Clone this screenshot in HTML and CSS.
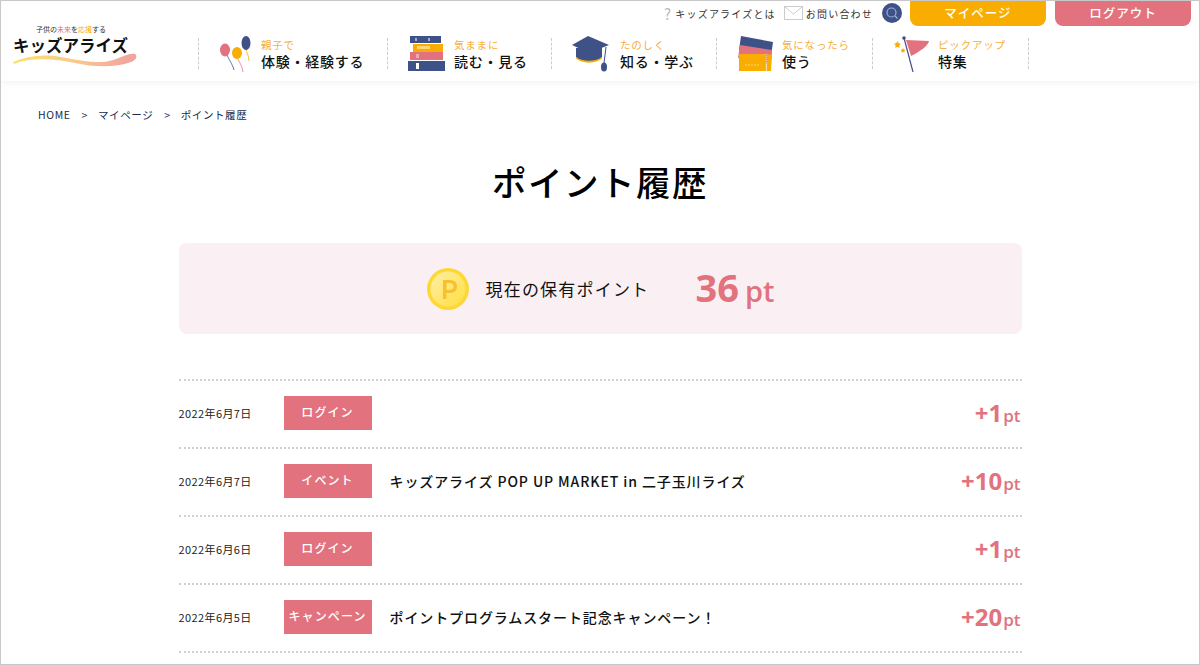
FILE: index.html
```html
<!DOCTYPE html>
<html lang="ja">
<head>
    <meta charset="UTF-8">
    <meta name="viewport" content="width=device-width, initial-scale=1.0">
    <title>ポイント履歴</title>
    <link rel="stylesheet" href="styles.css">
</head>
<body>
<div class="frame">
    <header class="header">
        <a class="logo">
            <span class="logo-tag">子供の<em class="red">未来</em>を<em class="yellow">応援</em>する</span>
            <span class="logo-name">キッズアライズ</span>
            <svg class="logo-wave" width="124" height="15" viewBox="0 0 124 15">
                <defs>
                    <linearGradient id="wave" x1="0" x2="1" y1="0" y2="0">
                        <stop offset="0" stop-color="#fbe36a"/>
                        <stop offset="0.5" stop-color="#f9c98d"/>
                        <stop offset="1" stop-color="#f2a0a0"/>
                    </linearGradient>
                </defs>
                <path d="M0 9C14 3 30 1 48 4C66 7 84 12 100 7C110 4 116 0 122 1C125 3 123 7 118 9C102 15 80 14 62 10C42 6 18 4 1 11Z" fill="url(#wave)"/>
            </svg>
        </a>
        <div class="header-right">
            <div class="util">
                <a class="util-link"><span class="q">?</span>キッズアライズとは</a>
                <a class="util-link">
                    <svg width="19" height="14" viewBox="0 0 19 14"><rect x="0.5" y="0.5" width="18" height="13" fill="#fff" stroke="#ccc"/><path d="M1 1L9.5 8L18 1" fill="none" stroke="#ccc"/></svg>
                    お問い合わせ
                </a>
                <span class="search">
                    <svg width="14" height="14" viewBox="0 0 14 14"><circle cx="6.5" cy="6.5" r="4.5" fill="none" stroke="#9fb0d6" stroke-width="1.2"/><path d="M10 10L12.5 12.5" stroke="#9fb0d6" stroke-width="1.2"/></svg>
                </span>
                <a class="btn btn-mypage">マイページ</a>
                <a class="btn btn-logout">ログアウト</a>
            </div>
            <nav class="nav">
                <a class="nav-item nav-1">
                    <svg width="36" height="38" viewBox="0 0 36 38">
                        <path d="M7 20C9 25 12 28 14 35" fill="none" stroke="#3f5288" stroke-width="0.8"/>
                        <path d="M17 22C19 27 22 30 23 37" fill="none" stroke="#e2727e" stroke-width="0.8"/>
                        <path d="M26 13C26 18 29 20 29 26" fill="none" stroke="#f8ad00" stroke-width="0.8"/>
                        <ellipse cx="5" cy="15" rx="5" ry="6.5" fill="#e2727e"/>
                        <ellipse cx="17" cy="18" rx="5" ry="6" fill="#f8ad00"/>
                        <ellipse cx="26" cy="8" rx="4.5" ry="7" fill="#3f5288"/>
                    </svg>
                    <span class="nav-text"><small>親子で</small><b>体験・経験する</b></span>
                </a>
                <a class="nav-item nav-2">
                    <svg width="38" height="37" viewBox="0 0 38 37">
                        <rect x="2" y="1" width="31" height="7" fill="#3f5288"/>
                        <rect x="7" y="3" width="2" height="3" fill="#9fb0d6"/>
                        <rect x="20" y="3" width="2" height="3" fill="#9fb0d6"/>
                        <rect x="5" y="9" width="30" height="8" fill="#f8ad00"/>
                        <rect x="9" y="11" width="13" height="3" fill="#fbd873"/>
                        <rect x="2" y="17" width="33" height="8" fill="#e2727e"/>
                        <rect x="8" y="19" width="3" height="4" fill="#f0aab2"/>
                        <rect x="0" y="26" width="37" height="10" fill="#3f5288"/>
                        <rect x="8" y="28" width="3" height="6" fill="#fff"/>
                    </svg>
                    <span class="nav-text"><small>気ままに</small><b>読む・見る</b></span>
                </a>
                <a class="nav-item nav-3">
                    <svg width="38" height="36" viewBox="0 0 38 36">
                        <path d="M4 12V21C10 27 24 27 30 21V12Z" fill="#3f5288"/>
                        <path d="M4 21C10 26 24 26 30 21V22.5C24 28 10 28 4 22.5Z" fill="#f8ad00"/>
                        <path d="M16 0L37 9L17 17L0 9Z" fill="#3f5288"/>
                        <path d="M34 11L32 27" stroke="#3f5288" stroke-width="1"/>
                        <ellipse cx="32" cy="31" rx="3" ry="4.5" fill="#3f5288"/>
                    </svg>
                    <span class="nav-text"><small>たのしく</small><b>知る・学ぶ</b></span>
                </a>
                <a class="nav-item nav-4">
                    <svg width="36" height="36" viewBox="0 0 36 36">
                        <path d="M3 0L35 6L33 20L1 14Z" fill="#3f5288"/>
                        <path d="M2 9L34 14L33 28L0 22Z" fill="#e2727e"/>
                        <rect x="1" y="18" width="27" height="17" fill="#f8ad00"/>
                        <path d="M28.5 18L34 19L33 35L28.5 35Z" fill="#f8ad00"/>
                        <path d="M28.2 18V35" stroke="#fff" stroke-width="0.6" stroke-dasharray="1 1"/>
                        <path d="M7 29H22" stroke="#fbd873" stroke-width="1" stroke-dasharray="2 1"/>
                    </svg>
                    <span class="nav-text"><small>気になったら</small><b>使う</b></span>
                </a>
                <a class="nav-item nav-5">
                    <svg width="37" height="36" viewBox="0 0 37 36">
                        <path d="M10 2L19 36" stroke="#3f5288" stroke-width="1.2"/>
                        <circle cx="10" cy="2" r="1.8" fill="#3f5288"/>
                        <path d="M12 4L35 5C34 10 25 16 17 20Z" fill="#e2727e"/>
                        <path d="M3.5 5L4.7 7.3L7 7.7L5.3 9.5L5.7 12L3.5 10.8L1.300 12L1.700 9.500L0 7.700L2.300 7.300Z" fill="#f8ad00"/>
                        <path d="M9 12L9.800 13.500L11.500 13.800L10.300 15L10.600 16.700L9 15.900L7.400 16.700L7.700 15L6.500 13.800L8.200 13.500Z" fill="#f8ad00"/>
                    </svg>
                    <span class="nav-text"><small>ピックアップ</small><b>特集</b></span>
                </a>
            </nav>
        </div>
    </header>

    <div class="crumbs">
        <a>HOME</a><i>&gt;</i><a>マイページ</a><i>&gt;</i><span>ポイント履歴</span>
    </div>

    <main class="main">
        <h1 class="title">ポイント履歴</h1>

        <section class="summary">
            <svg class="coin" width="44" height="44" viewBox="0 0 44 44">
                <defs>
                    <linearGradient id="coin" x1="0" x2="1" y1="0" y2="1">
                        <stop offset="0" stop-color="#ffeeaa"/>
                        <stop offset="1" stop-color="#ffdf3c"/>
                    </linearGradient>
                </defs>
                <circle cx="22" cy="22" r="21" fill="#fdd835"/>
                <circle cx="22" cy="22" r="17.5" fill="url(#coin)"/>
                <path d="M17 32V13H24C29 13 31 16 31 19.5C31 23 29 26 24 26H20.5V32ZM20.5 16V23H23.5C26 23 27.5 22 27.5 19.5C27.5 17 26 16 23.5 16Z" fill="#f9c02e"/>
            </svg>
            <span class="summary-label">現在の保有ポイント</span>
            <span class="summary-value">36<small>pt</small></span>
        </section>

        <ul class="history">
            <li class="row">
                <span class="date">2022年6月7日</span>
                <span class="tag">ログイン</span>
                <span class="desc"></span>
                <span class="pts">+1<small>pt</small></span>
            </li>
            <li class="row">
                <span class="date">2022年6月7日</span>
                <span class="tag">イベント</span>
                <span class="desc">キッズアライズ POP UP MARKET in 二子玉川ライズ</span>
                <span class="pts">+10<small>pt</small></span>
            </li>
            <li class="row">
                <span class="date">2022年6月6日</span>
                <span class="tag">ログイン</span>
                <span class="desc"></span>
                <span class="pts">+1<small>pt</small></span>
            </li>
            <li class="row">
                <span class="date">2022年6月5日</span>
                <span class="tag">キャンペーン</span>
                <span class="desc">ポイントプログラムスタート記念キャンペーン！</span>
                <span class="pts">+20<small>pt</small></span>
            </li>
        </ul>
    </main>
</div>
</body>
</html>
```

FILE: styles.css
```css
html, body {
    margin: 0;
    padding: 0;
    height: 100%;
    overflow: hidden;
}
body {
    font-family: "Noto Sans CJK JP", "Noto Sans", sans-serif;
    color: #111;
    background: #fff;
}
ul {
    list-style: none;
    margin: 0;
    padding: 0;
}
.frame {
    box-sizing: border-box;
    height: 665px;
    border: 1px solid #c8c8c8;
    overflow: hidden;
}

/* header */
.header {
    display: flex;
    height: 80px;
    box-shadow: 0 2px 6px rgba(0,0,0,0.05);
}
.logo {
    flex: none;
    width: 197px;
    padding: 22px 0 0 12px;
    box-sizing: border-box;
    display: flex;
    flex-direction: column;
}
.logo-tag {
    font-size: 7px;
    line-height: 12px;
    height: 12px;
    padding-left: 23px;
    color: #333;
    white-space: nowrap;
}
.logo-tag em {
    font-style: normal;
}
.logo-tag .red { color: #e2727e; }
.logo-tag .yellow { color: #f8ad00; }
.logo-name {
    font-size: 16.5px;
    font-weight: 700;
    line-height: 20px;
    white-space: nowrap;
}
.logo-wave {
    margin-top: -2px;
}
.header-right {
    flex: 1;
    display: flex;
    flex-direction: column;
}
.util {
    display: flex;
    align-items: flex-start;
    justify-content: flex-end;
    height: 37px;
}
.util-link {
    display: flex;
    align-items: center;
    gap: 3px;
    font-size: 10px;
    letter-spacing: 1.2px;
    color: #333;
    height: 24px;
    margin-right: 8px;
}
.util-link .q {
    font-size: 15px;
    color: #bbb;
}
.search {
    width: 20px;
    height: 20px;
    border-radius: 50%;
    background: #3f5288;
    display: flex;
    align-items: center;
    justify-content: center;
    margin: 2px 8px 0 1px;
}
.btn {
    display: block;
    width: 136px;
    height: 25px;
    line-height: 24px;
    text-align: center;
    color: #fff;
    font-size: 12.5px;
    font-weight: 500;
    letter-spacing: 1px;
    border-radius: 0 0 8px 8px;
}
.btn-mypage {
    background: #f8ad00;
    margin-right: 9px;
}
.btn-logout {
    margin-right: 8px;
    background: #e2727e;
}
.nav {
    display: flex;
    height: 31px;
    align-items: center;
    border-left: 1px dashed #ccc;
    width: max-content;
}
.nav-item {
    box-sizing: border-box;
    display: flex;
    align-items: center;
    height: 31px;
    border-right: 1px dashed #ccc;
    padding-left: 21px;
    gap: 5px;
}
.nav-item svg {
    flex: none;
}
.nav-1 { width: 189px; }
.nav-2 { width: 164px; padding-left: 20px; gap: 8px; }
.nav-3 { width: 165px; padding-left: 20px; gap: 10px; }
.nav-4 { width: 156px; padding-left: 21px; gap: 8px; }
.nav-5 { width: 156px; padding-left: 21px; gap: 7px; }
.nav-text {
    display: flex;
    flex-direction: column;
    white-space: nowrap;
}
.nav-text small {
    font-size: 10.5px;
    line-height: 14px;
    letter-spacing: 0.8px;
    color: #f8ad3c;
}
.nav-text b {
    font-size: 14px;
    line-height: 18px;
    font-weight: 500;
    letter-spacing: 0.75px;
}

/* breadcrumb */
.crumbs {
    display: flex;
    align-items: center;
    padding: 26px 0 0 37px;
    font-size: 10.5px;
    line-height: 15px;
    letter-spacing: 0.6px;
    color: #1a2a4a;
}
.crumbs i {
    font-style: normal;
    margin: 0 10px 0 11px;
}

/* main */
.main {
    width: 843px;
    margin: 0 auto;
}
.title {
    margin: 34px 0 0;
    font-size: 34.5px;
    line-height: 50px;
    font-weight: 500;
    letter-spacing: 1.5px;
    text-align: center;
    color: #000;
}
.summary {
    display: flex;
    align-items: center;
    justify-content: center;
    height: 91px;
    margin-top: 37px;
    background: #faf0f3;
    border-radius: 8px;
}
.coin {
    flex: none;
}
.summary-label {
    margin-left: 16px;
    font-size: 17px;
    letter-spacing: 1.2px;
    width: 210px;
    white-space: nowrap;
}
.summary-value {
    font-size: 38px;
    line-height: 44px;
    font-weight: 700;
    color: #e2727e;
    font-family: "Open Sans", "Noto Sans", sans-serif;
}
.summary-value small {
    font-size: 29px;
    margin-left: 6px;
    font-weight: 600;
}
.history {
    margin-top: 45px;
    border-top: 2px dotted #d0d0d0;
}
.row {
    display: flex;
    align-items: center;
    height: 63px;
    padding-bottom: 3px;
    border-bottom: 2px dotted #d0d0d0;
}
.date {
    flex: none;
    width: 105px;
    font-size: 11px;
    letter-spacing: 0.4px;
    color: #222;
}
.tag {
    flex: none;
    box-sizing: border-box;
    width: 88px;
    height: 34px;
    line-height: 32px;
    text-align: center;
    background: #e2727e;
    color: #fff;
    font-size: 12px;
    font-weight: 500;
    letter-spacing: 1.1px;
    white-space: nowrap;
}
.desc {
    flex: 1;
    margin-left: 18px;
    font-size: 14px;
    font-weight: 500;
    letter-spacing: 0.9px;
    white-space: nowrap;
}
.pts {
    flex: none;
    font-family: "Open Sans", "Noto Sans", sans-serif;
    font-size: 24px;
    font-weight: 700;
    color: #e2727e;
    padding-right: 1px;
}
.pts small {
    font-size: 17px;
    font-weight: 600;
    margin-left: 1px;
}
```
